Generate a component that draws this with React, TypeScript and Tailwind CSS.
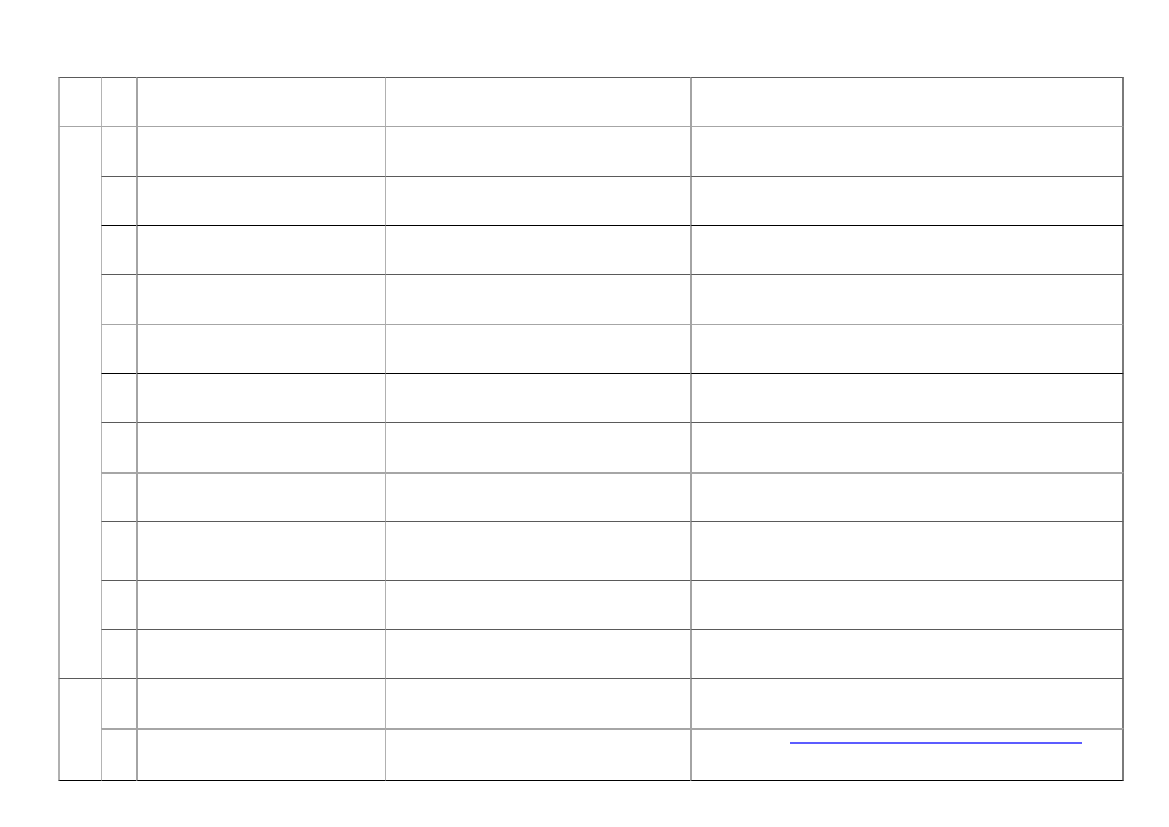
import React from "react";

type Line = "dark" | "black" | "light" | "light2";

const topLine: Record<Line, string> = {
  dark: "border-t border-t-[#5a5a5a]",
  black: "border-t border-t-black",
  light: "border-t border-t-[#a6a6a6]",
  light2: "border-t-2 border-t-[#a6a6a6]",
};

// left/right edges for the 5 columns
const colLine = [
  "border-l-2 border-l-[#b0b0b0]",
  "border-l border-l-[#b4b4b4]",
  "border-l-2 border-l-[#a4a4a4]",
  "border-l border-l-[#b0b0b0]",
  "border-l-2 border-l-[#a4a4a4] border-r-2 border-r-[#7a7a7a]",
];

// top line of every row, header first
const rows: Line[] = [
  "dark",
  "light",
  "dark",
  "black",
  "dark",
  "light",
  "black",
  "dark",
  "light2",
  "dark",
  "dark",
  "dark",
  "dark",
  "light2",
];

const App: React.FC = () => {
  const last = rows.length - 1;

  return (
    <div className="min-h-[827px] bg-white pt-[77px] pl-[58px] font-['Liberation_Sans',sans-serif]">
      <div className="grid w-[1064px] grid-cols-[43px_35px_249px_305px_434px] grid-rows-[49px_50px_49px_49px_50px_49px_49px_50px_49px_59px_49px_49px_50px_53px]">
        {rows.map((line, r) => {
          const cells: React.ReactNode[] = [];

          // first column: header cell, then two merged groups
          if (r === 0) {
            cells.push(<div key="c0" className={`${topLine[line]} ${colLine[0]}`} />);
          } else if (r === 1) {
            cells.push(<div key="c0" className={`row-span-11 ${topLine[line]} ${colLine[0]}`} />);
          } else if (r === 12) {
            cells.push(
              <div key="c0" className={`row-span-2 ${topLine[line]} ${colLine[0]} border-b border-b-black`} />
            );
          }

          for (let c = 1; c < 5; c++) {
            const bottom = r === last ? "border-b border-b-black" : "";
            cells.push(
              <div key={`c${c}`} className={`${topLine[line]} ${colLine[c]} ${bottom}`}>
                {r === last && c === 4 && (
                  <span className="ml-[98px] mt-[12px] block h-[2px] w-[292px] bg-[#5c5cff]" />
                )}
              </div>
            );
          }

          return <React.Fragment key={r}>{cells}</React.Fragment>;
        })}
      </div>
    </div>
  );
};

export default App;
